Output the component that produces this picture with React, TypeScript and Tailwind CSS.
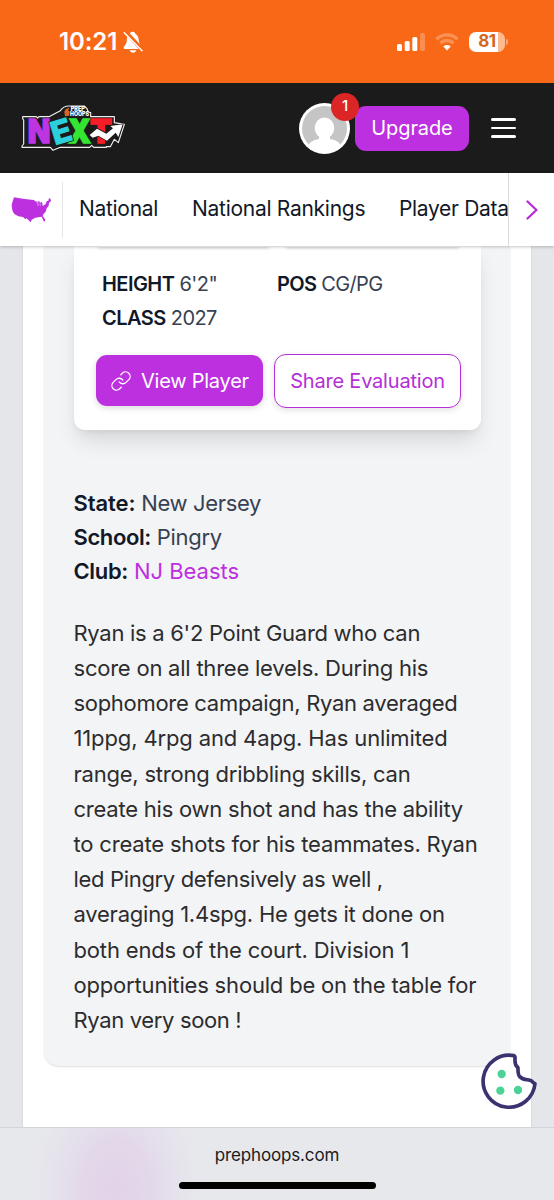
import { Link } from "lucide-react";

const storyLines = [
    { text: "Ryan is a 6'2 Point Guard who can", track: "tracking-[-0.29px]" },
    { text: "score on all three levels. During his", track: "tracking-[-0.23px]" },
    { text: "sophomore campaign, Ryan averaged", track: "tracking-[-0.3px]" },
    { text: "11ppg, 4rpg and 4apg. Has unlimited", track: "tracking-[-0.14px]" },
    { text: "range, strong dribbling skills, can", track: "tracking-[-0.22px]" },
    { text: "create his own shot and has the ability", track: "tracking-[-0.23px]" },
    { text: "to create shots for his teammates. Ryan", track: "tracking-[-0.18px]" },
    { text: "led Pingry defensively as well ,", track: "tracking-[-0.33px]" },
    { text: "averaging 1.4spg. He gets it done on", track: "tracking-[-0.23px]" },
    { text: "both ends of the court. Division 1", track: "tracking-[-0.16px]" },
    { text: "opportunities should be on the table for", track: "tracking-[-0.18px]" },
    { text: "Ryan very soon !", track: "tracking-[-0.35px]" },
];

function StatusBar() {
    return (
        <div className="h-[83px] shrink-0 bg-[#f96816] flex justify-between pl-[59px] pr-[46px] text-white">
            <div className="flex items-center h-[83px] gap-[5px]">
                <span className="w-[59px] text-[24px] leading-none font-semibold tracking-[-0.1px] whitespace-nowrap">10:21</span>
                <svg width="20" height="22" viewBox="0 0 60 66" fill="currentColor">
                    <path d="M30 2c-5 0-8 2-10 5l33 35c-4-6-5-9-6-16-1-10-4-15-10-18-1-4-3-6-7-6z" />
                    <path d="M13 17c-2 5-1 10-2 15-1 9-9 13-9 18 0 3 2 4 5 4h40z" />
                    <path d="M20 58h20c-1 5-5 7-10 7s-9-2-10-7z" />
                    <path d="M4 5l53 54" stroke="currentColor" strokeWidth="4.5" strokeLinecap="round" />
                </svg>
            </div>
            <div className="flex items-center h-[83px]">
                <svg width="28" height="18" viewBox="0 0 28 18" fill="currentColor">
                    <rect x="0" y="11" width="5" height="7" rx="1.5" />
                    <rect x="7.7" y="8" width="5" height="10" rx="1.5" />
                    <rect x="15.3" y="4" width="5" height="14" rx="1.5" />
                    <rect x="23" y="0" width="5" height="18" rx="1.5" opacity="0.25" />
                </svg>
                <svg className="ml-[10px]" width="24" height="18" viewBox="0 0 24 18" fill="none" stroke="currentColor" strokeWidth="3.4">
                    <path d="M1.5 6.2C7.3.4 16.7.4 22.5 6.2" opacity="0.28" />
                    <path d="M5.5 10.2c3.6-3.6 9.4-3.6 13 0" opacity="0.28" />
                    <path d="M12 17.5l-3.7-4c2-2 5.4-2 7.4 0z" fill="currentColor" stroke="none" />
                </svg>
                <div className="ml-[10px] w-[36px] h-[20px] rounded-[7px] bg-[linear-gradient(to_right,#fff_81%,#fdba8f_81%)] flex items-center justify-center text-[#d4661c] text-[17px] font-bold leading-none tracking-[-0.5px]">
                    81
                </div>
                <div className="ml-[1px] w-[2px] h-[6px] rounded-r-full bg-[#fca46e]" />
            </div>
        </div>
    );
}

function Logo() {
    return (
        <svg className="overflow-visible" width="106" height="48" viewBox="0 0 318 144">
            <path
                d="M5 38H46L50 42L54 38H84L118 20Q128 5 146 6H190L198 14L202 24L209 26V38H280V56L310 61L292 116L280 106L268 128H256V130H218L212 124L206 130H118L96 139L88 130H3V126L8 120V48L5 44Z"
                fill="#1b1b1b"
                stroke="#eee"
                strokeWidth="3.5"
                strokeLinejoin="round"
            />
            <g fontFamily="Inter, sans-serif" fontWeight="900">
                <text x="20" y="117" fontSize="98" fill="#bd35e0" stroke="#bd35e0" strokeWidth="4" textLength="68" lengthAdjust="spacingAndGlyphs">N</text>
                <text x="141" y="117" fontSize="98" fill="#34e532" stroke="#34e532" strokeWidth="4" textLength="69" lengthAdjust="spacingAndGlyphs">X</text>
                <text x="207" y="117" fontSize="98" fill="#f51d27" stroke="#f51d27" strokeWidth="4" textLength="66" lengthAdjust="spacingAndGlyphs">T</text>
                <text x="89" y="118" fontSize="99" fill="#2bd0dc" stroke="#1b1b1b" strokeWidth="5" paintOrder="stroke" transform="rotate(-17 120 80)" textLength="62" lengthAdjust="spacingAndGlyphs">E</text>
                <text x="149" y="21" fontSize="17" fill="#fff" textLength="43" lengthAdjust="spacingAndGlyphs">PREP</text>
                <text x="147" y="36" fontSize="17" fill="#fff" textLength="57" lengthAdjust="spacingAndGlyphs">HOOPS</text>
            </g>
            <path d="M130 23q3-11 15-12l-3 8 4 5-2 11-12 2z" fill="#d96524" />
            <path
                d="M206 93L228 74L256 89L276 73L268 66L305 61L292 99L284 86L258 110L232 95L215 101Z"
                fill="#fff"
                stroke="#1b1b1b"
                strokeWidth="4"
                paintOrder="stroke"
            />
        </svg>
    );
}

function Header() {
    return (
        <header className="h-[90px] shrink-0 bg-[#1b1b1b] flex items-center pl-[21px] pr-[38px]">
            <Logo />
            <div className="relative ml-[172px] w-[51px] h-[51px]">
                <svg width="51" height="51" viewBox="0 0 51 51">
                    <defs>
                        <clipPath id="avatar">
                            <circle cx="25.5" cy="25.5" r="23.5" />
                        </clipPath>
                    </defs>
                    <circle cx="25.5" cy="25.5" r="25.5" fill="#fff" />
                    <circle cx="25.5" cy="25.5" r="22.5" fill="#c5c5c5" />
                    <g fill="#fff" clipPath="url(#avatar)">
                        <ellipse cx="25.5" cy="25" rx="9.8" ry="10.5" />
                        <path d="M20 32h11v4c6 1 10 3 12 9v8H8v-8c2-6 6-8 12-9z" />
                    </g>
                </svg>
                <span className="absolute left-[32px] top-[-10px] w-[28px] h-[28px] rounded-full bg-[#dc2626] text-white text-[15px] font-medium flex items-center justify-center">
                    1
                </span>
            </div>
            <button className="ml-[5px] w-[114px] h-[45px] rounded-[11px] bg-[#bd30df] text-white text-[20px] tracking-[-0.1px]">Upgrade</button>
            <div className="ml-[22px] flex flex-col gap-[6px]">
                <span className="w-[25px] h-[2.5px] rounded-full bg-white" />
                <span className="w-[25px] h-[2.5px] rounded-full bg-white" />
                <span className="w-[25px] h-[2.5px] rounded-full bg-white" />
            </div>
        </header>
    );
}

function NavBar() {
    return (
        <nav className="relative z-10 h-[73px] shrink-0 bg-white flex items-start shadow-[0_1px_3px_rgba(0,0,0,0.22)] text-[#111827] text-[21px] whitespace-nowrap">
            <div className="w-[63px] h-[56px] mt-[9px] border-r border-[#e5e7eb] pl-[11px] pt-[14px]">
                <svg width="41" height="27" viewBox="0 0 123 81" fill="#bd30df">
                    <path d="M9 4L40 9L69 12L72 16L80 17L84 15L88 22L90 17L94 20L95 30L104 24L107 16L112 14L114 6L119 10L120 15L114 21L113 29L107 37L104 47L97 55L95 60L102 70L102 77L98 75L92 62L81 64L73 65L62 71L59 79L52 72L47 67L43 70L36 63L22 61L10 54L5 46L3 37L2 26L5 16Z" />
                    <path d="M77 20l4-1v11M87 23l1 6" fill="none" stroke="#fff" strokeWidth="1.5" />
                </svg>
            </div>
            <div className="flex w-[445px] overflow-hidden h-[73px] pl-[16px] pt-[21px] leading-[30px]">
                <a className="w-[113px] shrink-0 tracking-[-0.3px]">National</a>
                <a className="w-[207px] shrink-0 tracking-[-0.28px]">National Rankings</a>
                <a className="shrink-0 tracking-[-0.32px]">Player Data</a>
            </div>
            <div className="h-[73px] flex-1 border-l border-[#d9dbdf] pl-[17px] pt-[27px]">
                <svg width="12" height="20" viewBox="0 0 12 20" fill="none" stroke="#b52fd6" strokeWidth="2.3" strokeLinecap="round" strokeLinejoin="round">
                    <path d="M1.5 1.5L10.5 10L1.5 18.5" />
                </svg>
            </div>
        </nav>
    );
}

function PlayerCard() {
    return (
        <div className="w-[407px] h-[184px] rounded-b-[11px] bg-white shadow-[0_14px_22px_-4px_rgba(0,0,0,0.12),0_4px_9px_-4px_rgba(0,0,0,0.1)]">
            <div className="flex justify-between pl-[24px] pr-[22px]">
                <div className="w-[171px] h-[1px] shadow-[0_1px_3px_rgba(0,0,0,0.35)]" />
                <div className="w-[173px] h-[1px] shadow-[0_1px_3px_rgba(0,0,0,0.35)]" />
            </div>
            <div className="grid grid-cols-[175px_1fr] pt-[20px] pl-[28.5px] text-[20px] leading-[34px] text-[#374151] whitespace-nowrap">
                <div className="tracking-[-0.55px]"><b className="font-semibold text-[#111827]">HEIGHT</b> 6'2"</div>
                <div className="tracking-[-0.65px]"><b className="font-semibold text-[#111827]">POS</b> CG/PG</div>
                <div className="tracking-[-0.55px]"><b className="font-semibold text-[#111827]">CLASS</b> 2027</div>
            </div>
            <div className="flex items-center pt-[18.5px] pl-[22.5px] text-[20px] whitespace-nowrap">
                <button className="w-[167px] h-[51px] rounded-[11px] bg-[#bd30df] text-white flex items-center pl-[14px] gap-[9px] shadow-[0_2px_6px_rgba(0,0,0,0.15)]">
                    <Link size={22} strokeWidth={1.4} />
                    <span className="tracking-[-0.24px]">View Player</span>
                </button>
                <button className="ml-[11px] w-[187px] h-[54px] rounded-[12px] border-[1.5px] border-[#b52fd6] bg-white text-[#b52fd6] tracking-[-0.2px] shadow-[0_2px_6px_rgba(0,0,0,0.12)]">
                    Share Evaluation
                </button>
            </div>
        </div>
    );
}

function CookieButton() {
    return (
        <svg className="absolute left-[480px] top-[1053px] z-20" width="58" height="58" viewBox="0 0 174 174">
            <path
                d="M102 8A78 78 0 1 0 165 92C160 90 157 84 150 82C142 79 130 82 119 71C113 64 114 54 114 44C106 38 104 30 105 18C105 13 106 9 102 8Z"
                fill="#fff"
                stroke="#3b3270"
                strokeWidth="11"
                strokeLinejoin="round"
            />
            <circle cx="65" cy="63" r="12.5" fill="#4bd396" />
            <circle cx="61" cy="113" r="12.5" fill="#4bd396" />
            <circle cx="114" cy="111" r="12.5" fill="#4bd396" />
        </svg>
    );
}

export default function App() {
    return (
        <div className="relative w-[554px] h-[1200px] overflow-hidden flex flex-col bg-[#e5e6ea] font-[Inter,sans-serif]">
            <StatusBar />
            <Header />
            <NavBar />

            {/* Evaluation */}
            <main className="h-[881px] shrink-0 mx-[23px] w-[508px] bg-white pl-[21px] shadow-[0_0_2px_rgba(0,0,0,0.12)]">
                <article className="h-[820px] w-[466px] bg-[#f3f4f6] rounded-b-[15px] pl-[29.5px] shadow-[0_1px_2px_rgba(0,0,0,0.13)]">
                    <PlayerCard />
                    <div className="pt-[57px] text-[22px] leading-[33.8px] text-[#374151] whitespace-nowrap">
                        <div className="tracking-[-0.33px]"><b className="font-semibold text-[#111827] tracking-[-0.1px]">State:</b> New Jersey</div>
                        <div className="tracking-[-0.3px]"><b className="font-semibold text-[#111827] tracking-[-0.4px]">School:</b> Pingry</div>
                        <div className="tracking-[-0.05px]"><b className="font-semibold text-[#111827] tracking-[-0.35px]">Club:</b> <a className="text-[#bd30df]">NJ Beasts</a></div>
                    </div>
                    <p className="mt-[27.4px] text-[22px] leading-[35.2px] text-[#2c2c2e] whitespace-nowrap">
                        {storyLines.map((line) => (
                            <span key={line.text} className={`block ${line.track}`}>{line.text}</span>
                        ))}
                    </p>
                </article>
            </main>

            {/* Browser bar */}
            <footer className="relative z-10 h-[73px] shrink-0 border-t border-[#d3d4d9] bg-[#e7e8ec] bg-[radial-gradient(ellipse_85px_120px_at_116px_60px,#e2d2e8_0%,#e3d8ea_40%,#e5e2ec_72%,rgba(231,232,236,0)_100%)] flex flex-col items-center pt-[14px]">
                <span className="text-[17px] leading-[26px] tracking-[-0.15px] text-[#1a1a1c]">prephoops.com</span>
                <div className="mt-[14px] w-[197px] h-[7px] rounded-full bg-black" />
            </footer>
            <CookieButton />
        </div>
    );
}
